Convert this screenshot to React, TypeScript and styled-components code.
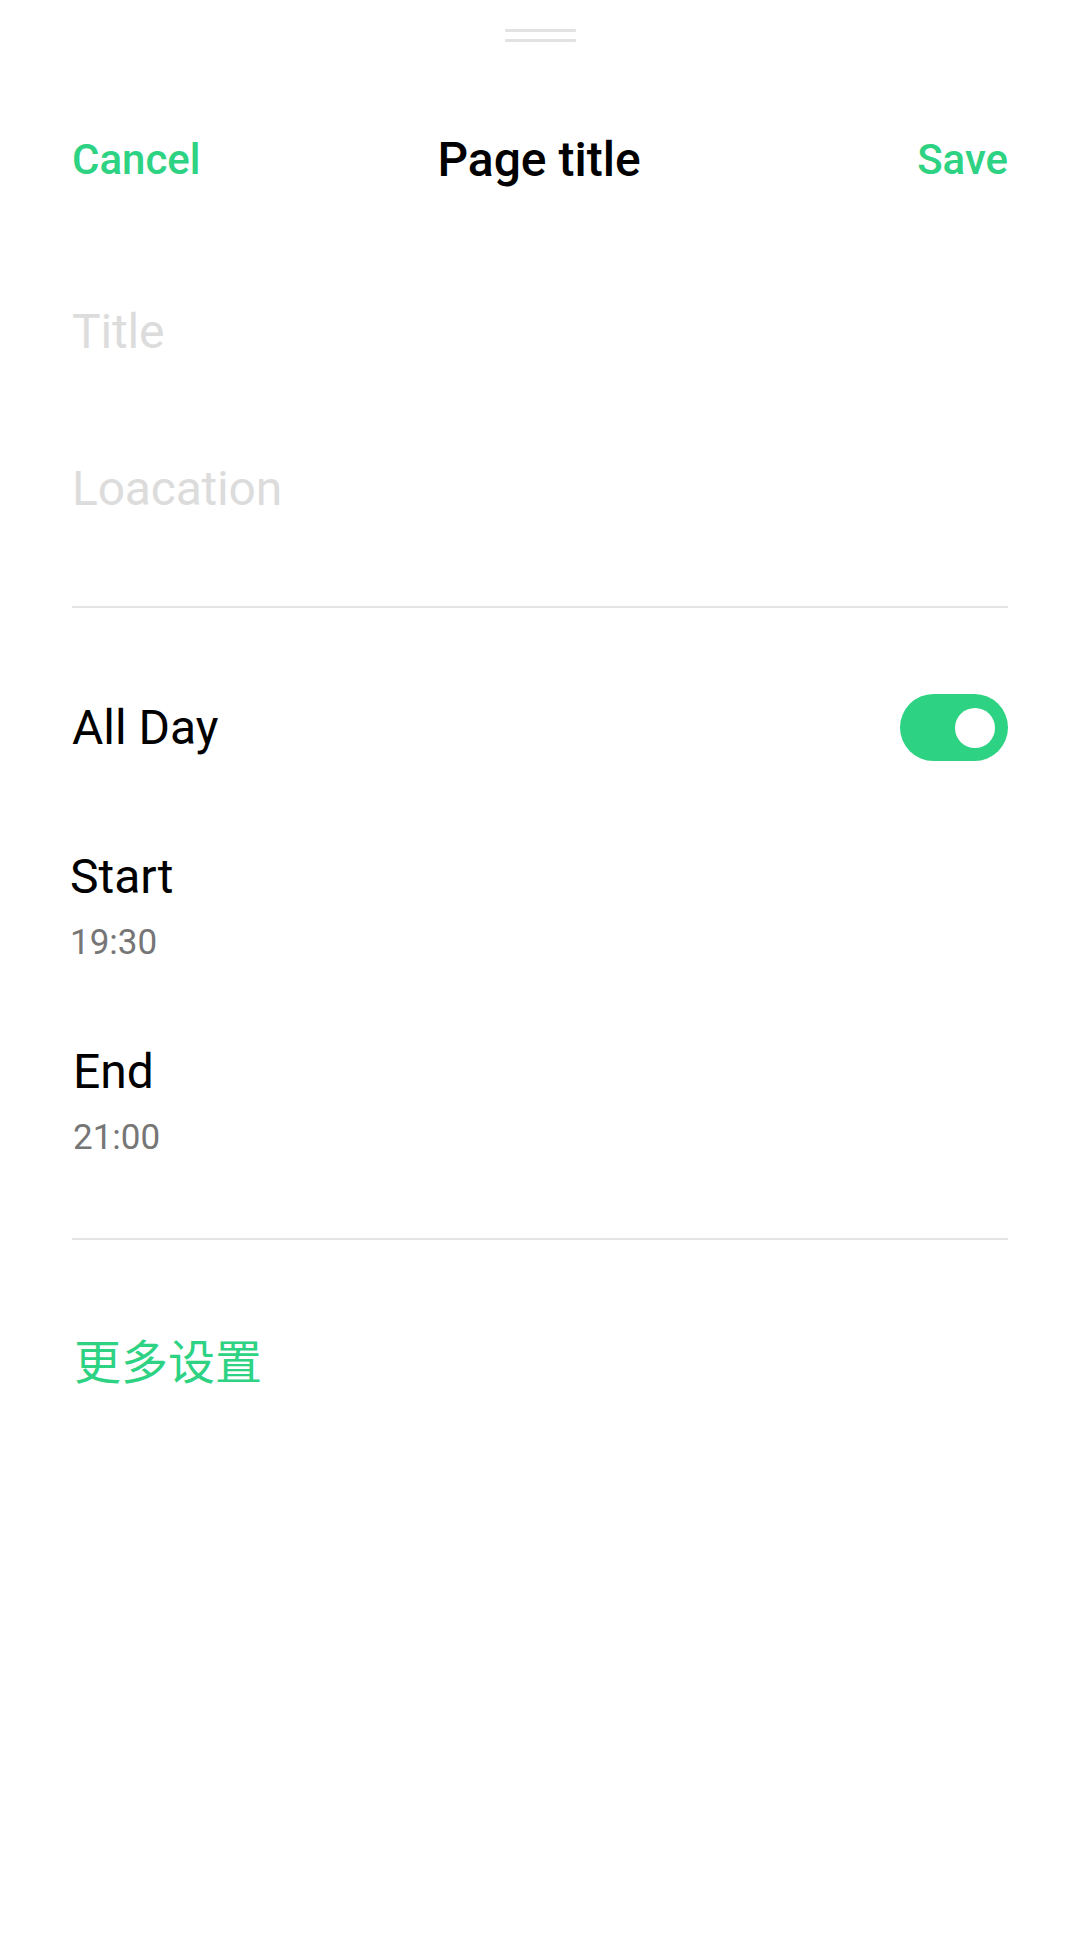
import React, { useState } from "react";
import styled, { createGlobalStyle } from "styled-components";

const GREEN = "#2dd282";

const GlobalStyle = createGlobalStyle`
  html, body {
    margin: 0;
    padding: 0;
    background: #ffffff;
  }
  body {
    font-family: Roboto, "Noto Sans", "Noto Sans CJK SC", sans-serif;
    -webkit-font-smoothing: antialiased;
  }
  * { box-sizing: border-box; }
`;

const Sheet = styled.div`
  width: 1077px;
  min-height: 1960px;
  background: #ffffff;
  display: flex;
  flex-direction: column;
  padding: 0 69px 0 72px;
`;

const Handle = styled.div`
  display: flex;
  flex-direction: column;
  align-items: center;
  gap: 7px;
  padding-top: 29px;
`;

const HandleBar = styled.span`
  display: block;
  width: 71px;
  height: 3px;
  border-radius: 1px;
  background: #e2e2e2;
`;

const Header = styled.header`
  display: grid;
  grid-template-columns: 1fr auto 1fr;
  align-items: center;
  height: 120px;
  margin-top: 58px;
`;

const HeaderAction = styled.button<{ $align: "start" | "end" }>`
  justify-self: ${(p) => p.$align};
  border: none;
  background: none;
  padding: 0;
  font-family: Roboto, sans-serif;
  font-size: 42px;
  font-weight: 500;
  line-height: 56px;
  color: ${GREEN};
  cursor: pointer;
`;

const PageTitle = styled.h1`
  margin: 0 0 0 -2px;
  font-family: Roboto, sans-serif;
  font-size: 48px;
  font-weight: 500;
  line-height: 56px;
  color: #000000;
`;

const FieldGroup = styled.section`
  display: flex;
  flex-direction: column;
  gap: 93px;
  padding: 79px 0 86px;
`;

const TextField = styled.input`
  display: block;
  width: 100%;
  height: 64px;
  border: none;
  outline: none;
  padding: 0;
  font-family: Roboto, sans-serif;
  font-size: 48px;
  font-weight: 400;
  letter-spacing: -0.2px;
  color: #222222;
  background: transparent;
  &::placeholder {
    color: #dcdcdc;
  }
`;

const Divider = styled.hr`
  margin: 0;
  border: none;
  height: 2px;
  background: #e4e4e4;
`;

const SwitchRow = styled.div`
  display: flex;
  align-items: center;
  justify-content: space-between;
  margin-top: 86px;
`;

const RowLabel = styled.span`
  font-family: Roboto, sans-serif;
  font-size: 48px;
  font-weight: 400;
  line-height: 56px;
  color: #000000;
`;

const Track = styled.button<{ $on: boolean }>`
  display: flex;
  align-items: center;
  justify-content: ${(p) => (p.$on ? "flex-end" : "flex-start")};
  width: 108px;
  height: 67px;
  padding: 0 13px;
  border: none;
  border-radius: 34px;
  background: ${(p) => (p.$on ? GREEN : "#d6d6d6")};
  cursor: pointer;
`;

const Knob = styled.span`
  display: block;
  width: 40px;
  height: 40px;
  border-radius: 50%;
  background: #ffffff;
`;

const TimeList = styled.section`
  display: flex;
  flex-direction: column;
  gap: 80px;
  padding: 88px 0 79px;
`;

const TimeBlock = styled.div<{ $indent: number }>`
  display: flex;
  flex-direction: column;
  margin-left: ${(p) => p.$indent}px;
`;

const TimeValue = styled.span`
  margin-top: 17px;
  font-family: Roboto, sans-serif;
  font-size: 35px;
  font-weight: 400;
  line-height: 42px;
  color: #767676;
`;

const MoreLink = styled.a`
  display: block;
  margin-top: 91px;
  margin-left: 2px;
  font-family: "Noto Sans CJK SC", "Noto Sans", sans-serif;
  font-size: 47px;
  font-weight: 400;
  line-height: 56px;
  color: ${GREEN};
  text-decoration: none;
  cursor: pointer;
`;

const times = [
  { label: "Start", value: "19:30", indent: -2 },
  { label: "End", value: "21:00", indent: 1 },
];

export default function App() {
  const [allDay, setAllDay] = useState(true);
  return (
    <>
      <GlobalStyle />
      <Sheet>
        <Handle>
          <HandleBar />
          <HandleBar />
        </Handle>
        <Header>
          <HeaderAction $align="start">Cancel</HeaderAction>
          <PageTitle>Page title</PageTitle>
          <HeaderAction $align="end">Save</HeaderAction>
        </Header>
        <FieldGroup>
          <TextField placeholder="Title" />
          <TextField placeholder="Loacation" />
        </FieldGroup>
        <Divider />
        <SwitchRow>
          <RowLabel>All Day</RowLabel>
          <Track $on={allDay} onClick={() => setAllDay(!allDay)} aria-pressed={allDay}>
            <Knob />
          </Track>
        </SwitchRow>
        <TimeList>
          {times.map((t) => (
            <TimeBlock key={t.label} $indent={t.indent}>
              <RowLabel>{t.label}</RowLabel>
              <TimeValue>{t.value}</TimeValue>
            </TimeBlock>
          ))}
        </TimeList>
        <Divider />
        <MoreLink>更多设置</MoreLink>
      </Sheet>
    </>
  );
}
